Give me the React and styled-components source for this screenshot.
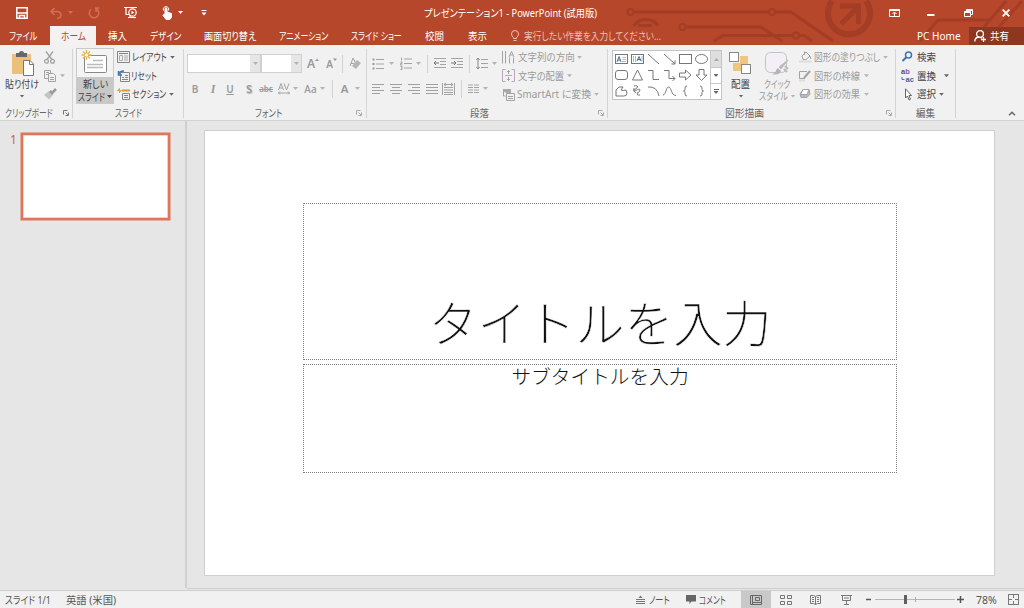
import React, { useLayoutEffect, useRef, useState } from "react";
import styled, { createGlobalStyle, css } from "styled-components";

const UI_FONT = '"Noto Sans", "Noto Sans CJK JP", sans-serif';

const GlobalStyle = createGlobalStyle`
  * { box-sizing: border-box; }
  html, body { margin: 0; padding: 0; }
  body { width: 1024px; height: 608px; overflow: hidden; font-family: ${UI_FONT}; background: #e6e6e6; }
  svg { display: block; flex: none; overflow: visible; }
`;

/* ---------- condensed UI label ---------- */
const gap = css`margin-left: ${(p) => p.$gap || 0}px;`;

const LabelBox = styled.span`
  display: block;
  flex: none;
  width: ${(p) => p.$w}px;
  height: 14px;
  line-height: 14px;
  font-size: ${(p) => p.$size || 10.5}px;
  font-weight: ${(p) => p.$weight || 400};
  color: ${(p) => p.$color || "#444"};
  white-space: nowrap;
  ${gap}
`;
const LabelInk = styled.span`
  display: inline-block;
  transform-origin: 0 50%;
  font-feature-settings: "palt";
`;

function Label({ children, w, size, color, gap: g, weight }) {
  const ref = useRef(null);
  const [scale, setScale] = useState(1);
  useLayoutEffect(() => {
    setScale(w / ref.current.offsetWidth);
  }, [w]);
  return (
    <LabelBox $w={w} $size={size} $color={color} $gap={g} $weight={weight}>
      <LabelInk ref={ref} style={{ transform: `scaleX(${scale})` }}>{children}</LabelInk>
    </LabelBox>
  );
}

const Arrow = styled.i`
  flex: none;
  width: 5px;
  height: 3px;
  background: ${(p) => p.$color || "#666"};
  clip-path: polygon(0 0, 100% 0, 50% 100%);
  ${gap}
`;

const IconSvg = styled.svg`
  fill: none;
  stroke: ${(p) => p.$c || "#a3a3a3"};
  stroke-width: ${(p) => p.$sw || 1};
  ${gap}
`;
const Icon = ({ w, h, gap: g, c, sw, children }) => (
  <IconSvg width={w} height={h} viewBox={`0 0 ${w} ${h}`} $gap={g} $c={c} $sw={sw}>{children}</IconSvg>
);

/* ---------- frame ---------- */
const Window = styled.div`
  width: 1024px;
  height: 608px;
  display: flex;
  flex-direction: column;
  background: #e6e6e6;
`;
const Header = styled.header`
  position: relative;
  height: 45px;
  flex: none;
  background: #b7472a;
  display: flex;
  flex-direction: column;
`;
const Circuit = styled.svg`
  position: absolute;
  left: 0;
  top: 0;
  fill: none;
  stroke: #a33d26;
  stroke-width: 3;
`;
const TitleBar = styled.div`
  position: relative;
  height: 26px;
  display: flex;
  align-items: center;
  padding-bottom: 1px;
`;
const TabBar = styled.nav`
  position: relative;
  height: 19px;
  display: flex;
  align-items: center;
`;
const ActiveTab = styled.div`
  width: 46px;
  height: 19px;
  margin-left: 13px;
  background: #f3f2f1;
  display: flex;
  align-items: center;
  justify-content: center;
`;
const ShareButton = styled.div`
  width: 55px;
  height: 18px;
  margin: 1px 0 0 8px;
  background: #8d3721;
  display: flex;
  align-items: center;
  padding-left: 5px;
`;

/* ---------- ribbon ---------- */
const Ribbon = styled.section`
  height: 76px;
  flex: none;
  display: flex;
  background: #f1f1f1;
  border-bottom: 1px solid #d2d2d2;
`;
const Group = styled.div`
  flex: none;
  width: ${(p) => p.$w}px;
  height: 75px;
  padding-top: 3px;
  display: flex;
  flex-direction: column;
  background: linear-gradient(#d4d4d4, #d4d4d4) right 4px / 1px 69px no-repeat;
`;
const GroupBody = styled.div`
  flex: none;
  height: 56px;
  display: flex;
`;
const GroupFooter = styled.div`
  flex: none;
  height: 16px;
  padding-top: 1px;
  display: flex;
  align-items: center;
`;
const Column = styled.div`
  display: flex;
  flex-direction: column;
  flex: none;
  ${gap}
`;
const CommandRow = styled.div`
  display: flex;
  align-items: center;
  height: 18.5px;
`;
const ToolRow = styled.div`
  display: flex;
  align-items: center;
  height: ${(p) => p.$h || 25}px;
  margin-top: ${(p) => p.$top || 0}px;
`;
const BigButton = styled.div`
  flex: none;
  width: ${(p) => p.$w}px;
  height: 56px;
  display: flex;
  flex-direction: column;
  align-items: center;
  padding-top: ${(p) => p.$top || 3}px;
  ${gap}
`;
const BigLine = styled.div`
  display: flex;
  align-items: center;
  justify-content: center;
  height: ${(p) => p.$h || 13}px;
  margin-top: ${(p) => p.$top || 0}px;
`;
const NewSlideButton = styled.div`
  flex: none;
  width: 38px;
  height: 56px;
  margin-left: 3px;
  border: 1px solid #c9c9c9;
  background: linear-gradient(#f4f4f4 28px, #c8c8c8 28px);
  display: flex;
  flex-direction: column;
  align-items: center;
`;
const Combo = styled.div`
  flex: none;
  width: ${(p) => p.$w}px;
  height: 19px;
  border: 1px solid #d0d0d0;
  background: linear-gradient(90deg, #fff calc(100% - 10px), #e6e6e6 calc(100% - 10px));
  display: flex;
  align-items: center;
  justify-content: flex-end;
  padding-right: 2px;
  ${gap}
`;
const Rule = styled.i`
  flex: none;
  width: 1px;
  height: 18px;
  background: #d2d2d2;
  ${gap}
`;
const Glyph = styled.span`
  flex: none;
  width: ${(p) => p.$w}px;
  text-align: center;
  font-size: ${(p) => p.$size || 11}px;
  line-height: 14px;
  font-weight: ${(p) => p.$weight || 600};
  font-style: ${(p) => (p.$italic ? "italic" : "normal")};
  font-family: ${(p) => (p.$serif ? '"Liberation Serif", serif' : UI_FONT)};
  text-decoration: ${(p) => p.$deco || "none"};
  text-shadow: ${(p) => (p.$shadow ? "1px 1px 1px #bbb" : "none")};
  color: #999;
  white-space: nowrap;
  ${gap}
`;
const Gallery = styled.div`
  flex: none;
  display: flex;
  width: 110px;
  height: 50px;
  margin: 2px 0 0 4px;
  border: 1px solid #c3c3c3;
  background: #fff;
`;
const ShapeGrid = styled.div`
  display: grid;
  grid-template-columns: repeat(6, 16px);
  grid-template-rows: repeat(3, 16px);
  width: 97px;
  place-items: center;
`;
const GalleryScroll = styled.div`
  flex: 1;
  display: grid;
  grid-template-rows: repeat(3, 1fr);
  border-left: 1px solid #c9c9c9;
`;
const ScrollCell = styled.div`
  display: flex;
  flex-direction: column;
  gap: 1px;
  align-items: center;
  justify-content: center;
  background: ${(p) => (p.$off ? "#dedede" : "#fff")};
  & + & { border-top: 1px solid #c9c9c9; }
`;
const Bar = styled.i`
  width: 5px;
  height: 1px;
  background: #666;
`;
const UpArrow = styled(Arrow)`
  transform: rotate(180deg);
`;
const RibbonEnd = styled.div`
  flex: 1;
  display: flex;
  align-items: flex-end;
  justify-content: flex-end;
  padding: 0 8px 4px 0;
`;

/* ---------- workspace ---------- */
const Workspace = styled.main`
  height: 467px;
  flex: none;
  display: flex;
`;
const ThumbPane = styled.aside`
  width: 187px;
  height: 467px;
  border-right: 2px solid #d0d0d0;
  display: flex;
  align-items: flex-start;
  padding: 12px 0 0 10px;
`;
const ThumbNumber = styled.span`
  width: 11px;
  margin-top: -1px;
  font-size: 12px;
  line-height: 15px;
  color: #cf5f43;
`;
const Thumb = styled.div`
  width: 149px;
  height: 87px;
  background: #fff;
  border: 2px solid #de765a;
  box-shadow: 0 0 0 0.5px #de765a, inset 0 0 0 0.5px #e9a390;
`;
const Canvas = styled.div`
  flex: 1;
  height: 468px;
  border-bottom: 1px solid #cdcdcd;
  padding: 9px 0 0 17px;
`;
const Slide = styled.div`
  width: 791px;
  height: 446px;
  background: #fff;
  border: 1px solid #cfcfcf;
  padding: 72px 0 0 98px;
  display: flex;
  flex-direction: column;
  gap: 4px;
`;
const Placeholder = styled.div`
  width: 594px;
  height: ${(p) => p.$h}px;
  border: 1px dotted #7a7a7a;
  display: flex;
  justify-content: center;
  align-items: ${(p) => (p.$bottom ? "flex-end" : "flex-start")};
  color: #111;
  font-family: "Noto Sans CJK JP", sans-serif;
  font-weight: 300;
  white-space: nowrap;
`;
const TitleText = styled.div`
  font-size: 49px;
  line-height: 72px;
  padding-bottom: 2px;
  -webkit-text-stroke: 0.5px #fff;
`;
const SubtitleText = styled.div`
  font-size: 19.7px;
  line-height: 21px;
`;

/* ---------- status bar ---------- */
const StatusBar = styled.footer`
  height: 18px;
  margin-top: 2px;
  border-top: 1px solid #cdcdcd;
  background: #f1f1f1;
  display: flex;
  align-items: center;
`;
const ActiveView = styled.div`
  width: 30px;
  height: 17px;
  margin-left: 15px;
  background: #c9c9c9;
  display: flex;
  align-items: center;
  justify-content: center;
`;
const ZoomTrack = styled.div`
  width: 80px;
  height: 10px;
  margin-left: 4px;
  display: flex;
  align-items: center;
  background: linear-gradient(#b5b5b5, #b5b5b5) 0 50% / 100% 1px no-repeat;
`;
const ZoomKnob = styled.i`
  width: 3px;
  height: 9px;
  margin-left: 29px;
  background: #606060;
`;
const ZoomTick = styled.i`
  width: 1px;
  height: 5px;
  margin-left: 8px;
  background: #aaa;
`;

const Launcher = ({ gap: g, c = "#aaa" }) => (
  <Icon w={6} h={6} gap={g} c={c}>
    <path d="M.5 4.5V.5H4.5M2.5 2.5L5 5M5.5 2.5V5.5H2.5" />
  </Icon>
);

const Lines = ({ rows, w, gap: g }) => (
  <Icon w={w} h={10} gap={g} c="#a0a0a0">
    {rows.map(([a, b], i) => <path key={i} d={`M${a} ${i * 3 + 0.5}H${b}`} />)}
  </Icon>
);

const Indent = ({ right, gap: g }) => (
  <Icon w={12} h={11} gap={g}>
    <path d="M0 .5H12M6 3.5H12M6 6.5H12M0 9.5H12" />
    <path d={right ? "M0 5H5M3 3L5 5L3 7" : "M0 5H5M2 3L0 5L2 7"} stroke="#777" />
  </Icon>
);

const SHAPES = [
  <><rect x=".5" y="1.5" width="12" height="9" /><path d="M2 9L4 3.5L6 9M3 7H5.5" stroke="#41719c" /><path d="M7.5 4.5H11M7.5 6.5H11M7 8.5H11" strokeWidth=".7" stroke="#999" /></>,
  <><rect x=".5" y="1.5" width="12" height="9" /><path d="M6 8L8 3.5L10 8M7 6.5H9.5" stroke="#41719c" /><path d="M2.5 3V9M4.5 3V9M11 3V9" strokeWidth=".7" stroke="#999" /></>,
  <path d="M1 1L12 11" />,
  <path d="M1 1L12 11M12 7.5V11H8.5" />,
  <rect x=".5" y="1.5" width="12" height="9" />,
  <ellipse cx="6.5" cy="6" rx="6" ry="4.5" />,
  <rect x=".5" y="1.5" width="12" height="9" rx="2.5" />,
  <path d="M6.5 1L11.5 11H1.5Z" />,
  <path d="M1 1.5H6V10.5H12" />,
  <path d="M1 1.5H6V9.5H12M9.5 7L12 9.5L9.5 12" />,
  <path d="M.5 4H6.5V1L12 6L6.5 11V8H.5Z" />,
  <path d="M4 .5H9V6H12L6.5 11.5L1 6H4Z" />,
  <path d="M1 11V5L4 2H8L6 5Q8 6 11 5L12 8Q12 11 9 11Z" />,
  <path d="M3 1Q8 0 6 3Q1 6 4 6Q9 3 9 5Q9 7 6 8Q6 11 9 10M3 3Q1 6 5 8" />,
  <path d="M1 2Q10 1 12 11" />,
  <path d="M0 10C3 10 3 2 5.500 2C8.500 2 8 10.500 13 10.500" />,
  <path d="M8 1Q6 1 6 3V4.500Q6 6 4.500 6Q6 6 6 7.500V9Q6 11 8 11" />,
  <path d="M5 1Q7 1 7 3V4.500Q7 6 8.500 6Q7 6 7 7.500V9Q7 11 5 11" />,
];

const GREY = "#9b9b9b";
const OFF = "#b3b3b3";

function Decoration() {
  return (
    <Circuit width="1024" height="45" viewBox="0 0 1024 45">
      <circle cx="630.5" cy="12" r="3" strokeWidth="2" />
      <path d="M634 12H769M775.500 12H791L833 41M686 27H761L782 41M714 41L723 35.500H792M799.500 35.500H804L812 41" />
      <circle cx="772" cy="12" r="3" strokeWidth="2" />
      <circle cx="682.500" cy="27" r="3" strokeWidth="2" />
      <circle cx="796" cy="35.500" r="3" strokeWidth="2" />
      <path d="M634 26Q637 19.500 645.500 19.500Q655 19.500 658 26M638 25.500H652" />
      <path d="M832 1A21 21 0 1 0 866 1" strokeWidth="6" />
      <path d="M841 24L857 8M840 6H858.500V24" strokeWidth="5" />
      <path d="M920 41L938 20H990M984 27L1006 1M999 27L1022 1" />
    </Circuit>
  );
}

function AppHeader() {
  const W = "#fff";
  const dim = "#d06f57";
  return (
    <Header>
      <Decoration />
      <TitleBar>
        <Icon w={12} h={12} gap={16} c={W} sw={1.5}>
          <path d="M.8 .8H11.200V11.200H.8ZM1 6H11M3.500 11V8.500H8.500V11" />
        </Icon>
        <Icon w={12} h={12} gap={22} c={dim} sw={1.6}>
          <path d="M4.500 1L1 4.500L4.500 8M1 4.500H7Q11 5 11 8Q11 11 7 11.500" />
        </Icon>
        <Arrow $gap={6} $color={dim} />
        <Icon w={12} h={12} gap={15} c={dim} sw={1.6}>
          <path d="M3 2.500A4.700 4.700 0 1 0 8 1.800M7 1H11.500M8 1V5" />
        </Icon>
        <Icon w={14} h={13} gap={24} c={W} sw={1.2}>
          <path d="M0 1.500H13M2 1.500V8.500H5M4 11.500H8M6 9V11" />
          <circle cx="8.500" cy="6.500" r="3.700" /><path d="M7.500 4.800L10.300 6.500L7.500 8.200Z" fill={W} stroke="none" /><path d="M8 11.500H12" />
        </Icon>
        <Icon w={11} h={14} gap={24} c={W} sw={1}>
          <path d="M3 8V2.500Q4 1 5 2.500V6L9.500 7.500V11L8 13.500H4L1 9.500L1.500 8.500Z" fill={W} />
          <path d="M1.500 4.500Q.5 1 4 .7Q7.500 1 6.500 4.500" />
        </Icon>
        <Arrow $gap={5} $color={W} />
        <Icon w={6} h={6} gap={18} c={W}><path d="M.5 .5H5.500" /><path d="M.5 2.500H5.500L3 5.500Z" fill={W} stroke="none" /></Icon>
        <Label w={173} gap={217} color="#fff" size={10.5}>プレゼンテーション1 - PowerPoint (試用版)</Label>
        <Icon w={11} h={8} gap={292} c={W}>
          <path d="M.5 .5H10.500V7.500H.5ZM1 1.500H10M5.500 7V3.500M3.500 5L5.500 3L7.500 5" />
        </Icon>
        <Icon w={8} h={8} gap={27} c={W} sw={2}><path d="M0 6H7.500" /></Icon>
        <Icon w={9} h={8} gap={29} c={W}><path d="M2.500 2V.5H8.500V5.500H7M2.500 1.500H8.500" /><path d="M.5 2.500H6.500V7.500H.5ZM.5 3.500H6.500" /></Icon>
        <Icon w={8} h={8} gap={29} c={W} sw={1.8}><path d="M.7 .7L7.300 7.300M7.300 .7L.7 7.300" /></Icon>
      </TitleBar>
      <TabBar>
        <Label w={28} gap={9} color="#fff">ファイル</Label>
        <ActiveTab><Label w={25} color="#b7472a">ホーム</Label></ActiveTab>
        <Label w={19} gap={12} color="#fff">挿入</Label>
        <Label w={31} gap={23} color="#fff">デザイン</Label>
        <Label w={52} gap={23} color="#fff">画面切り替え</Label>
        <Label w={49} gap={23} color="#fff">アニメーション</Label>
        <Label w={51} gap={23} color="#fff">スライド ショー</Label>
        <Label w={19} gap={23} color="#fff">校閲</Label>
        <Label w={19} gap={24} color="#fff">表示</Label>
        <Icon w={8} h={12} gap={24} c="#f0c5b8">
          <path d="M2.500 8.500V7.500Q.5 6 .5 4Q.5 .5 4 .5Q7.500 .5 7.500 4Q7.500 6 5.500 7.500V8.500ZM2.500 10.500H5.500" />
        </Icon>
        <Label w={137} gap={5} color="#eebfb0">実行したい作業を入力してください...</Label>
        <Label w={44} gap={256} color="#fff">PC Home</Label>
        <ShareButton>
          <Icon w={13} h={12} c={W} sw={1.3}>
            <circle cx="6" cy="4" r="3.400" /><path d="M.8 11.500Q1 7.500 4.500 7L8 8M9.500 7V12M7 9.500H12" />
          </Icon>
          <Label w={19} gap={3} color="#fff">共有</Label>
        </ShareButton>
      </TabBar>
    </Header>
  );
}

function ClipboardGroup() {
  return (
    <Group $w={73}>
      <GroupBody>
        <BigButton $w={34} $gap={5}>
          <Icon w={24} h={25} gap={2}>
            <path d="M1 3H20V23H1Z" fill="#ecc078" stroke="none" />
            <path d="M5 2H8Q8 0 10.500 0Q13 0 13 2H16V6H5Z" fill="#666" stroke="none" />
            <path d="M12.500 9.500H19L22.500 13V24.500H12.500Z" fill="#fff" stroke="#777" /><path d="M18.500 9.500V13.500H22.500" stroke="#777" />
          </Icon>
          <BigLine $h={15}><Label w={34}>貼り付け</Label></BigLine>
          <BigLine $h={6} $top={2}><Arrow /></BigLine>
        </BigButton>
        <Column $gap={5}>
          <CommandRow>
            <Icon w={11} h={13} sw={1.3}>
              <path d="M2 .5L8 8.500M9 .5L3 8.500" /><circle cx="2.500" cy="10.300" r="1.900" /><circle cx="8.500" cy="10.300" r="1.900" />
            </Icon>
          </CommandRow>
          <CommandRow>
            <Icon w={12} h={12}>
              <path d="M.5 .5H6.500V8.500H.5ZM2 2.500H5M2 4.500H5" /><path d="M4.500 3.500H9.500L11.500 5.500V11.500H4.500Z" fill="#f1f1f1" /><path d="M6 7.500H10M6 9.500H10" />
            </Icon>
            <Arrow $gap={4} $color={OFF} />
          </CommandRow>
          <CommandRow>
            <Icon w={13} h={12}>
              <path d="M0 7L5 3L9 7L5 11.500Z" fill="#c4c4c4" stroke="none" /><path d="M6 3L9 6M9 4L12 1" strokeWidth="2.500" stroke="#999" />
            </Icon>
          </CommandRow>
        </Column>
      </GroupBody>
      <GroupFooter><Label w={48} gap={5} color="#666">クリップボード</Label><Launcher gap={10} c="#777" /></GroupFooter>
    </Group>
  );
}

function SlidesGroup() {
  return (
    <Group $w={111}>
      <GroupBody>
        <NewSlideButton>
          <Icon w={26} h={24} gap={-2} c="#888">
            <rect x="3.500" y="6.500" width="22" height="17" rx="1" fill="#fff" />
            <path d="M12 11.500H22M6 15.500H22M6 18.500H22" stroke="#bbb" strokeWidth="1.600" />
            <path d="M5.500 1V11M.5 6H10.500M2 2.500L9 9.500M9 2.500L2 9.500" stroke="#e8b458" strokeWidth="1.400" /><circle cx="5.500" cy="6" r="1.500" fill="#fff" stroke="none" />
          </Icon>
          <BigLine $h={14} $top={4}><Label w={25}>新しい</Label></BigLine>
          <BigLine $h={11}><Label w={27}>スライド</Label><Arrow $gap={2} $color="#444" /></BigLine>
        </NewSlideButton>
        <Column $gap={3}>
          <CommandRow>
            <Icon w={13} h={12} c="#858585"><path d="M.5 .5H12.500V11.500H.5ZM2 2.500H11" /><path d="M2.500 4.500H5.500V9.500H2.500ZM7 5H11M7 7H11M7 9H11" stroke="#aaa" /></Icon>
            <Label w={35} gap={2}>レイアウト</Label><Arrow $gap={3} />
          </CommandRow>
          <CommandRow>
            <Icon w={13} h={12} c="#858585"><path d="M3.500 2.500H12.500V11.500H3.500ZM8 5.500H11M5 7.500H7M8 7.500H11M5 9.500H11" /><path d="M1.500 1V5H5M1.500 5Q2 1 7 1" stroke="#3b78b5" strokeWidth="1.500" /></Icon>
            <Label w={26} gap={1}>リセット</Label>
          </CommandRow>
          <CommandRow>
            <Icon w={13} h={12} c="#858585"><path d="M5.500 5.500H12.500V11.500H5.500ZM7 7.500H11M7 9.500H11" /><path d="M5 2.500H13" stroke="#d89b3c" strokeWidth="2" /><path d="M2.500 0V5M0 2.500H5M1 1L4 4" stroke="#e3a94b" /></Icon>
            <Label w={34} gap={2}>セクション</Label><Arrow $gap={3} />
          </CommandRow>
        </Column>
      </GroupBody>
      <GroupFooter><Label w={27} gap={42} color="#666">スライド</Label></GroupFooter>
    </Group>
  );
}

function FontGroup() {
  return (
    <Group $w={183}>
      <GroupBody>
        <Column>
          <ToolRow $top={3}>
            <Combo $w={74} $gap={3}><Arrow $color={OFF} /></Combo>
            <Combo $w={41}><Arrow $color={OFF} /></Combo>
            <Glyph $w={8} $size={12} $gap={5}>A</Glyph>
            <Icon w={4} h={14}><path d="M0 4L2 1.500L4 4Z" fill="#999" stroke="none" /></Icon>
            <Glyph $w={7} $size={10} $gap={7}>A</Glyph>
            <Icon w={4} h={14}><path d="M0 1.500L2 4L4 1.500Z" fill="#999" stroke="none" /></Icon>
            <Rule $gap={5} />
            <Icon w={12} h={13} gap={6}>
              <path d="M1 9L4 1L6.500 6M2 6.500H5" /><path d="M3 9L8 3L12 6L7 12Z" fill="#b5b5b5" stroke="none" />
            </Icon>
          </ToolRow>
          <ToolRow>
            <Glyph $w={8} $gap={7} $size={10}>B</Glyph>
            <Glyph $w={8} $gap={10} $italic $serif $size={12}>I</Glyph>
            <Glyph $w={8} $gap={9} $deco="underline" $size={10}>U</Glyph>
            <Glyph $w={8} $gap={11} $shadow $size={11}>S</Glyph>
            <Glyph $w={14} $gap={6} $deco="line-through" $size={8}>abc</Glyph>
            <Icon w={12} h={12} gap={5}>
              <path d="M.5 .5L3 7L5.500 .5M1 -0" stroke="none" />
              <path d="M.5 7L3 .5L5.500 7M1.500 5H4.500M6 .5L8.500 7L11 .5M0 10H12M2 8.500L.5 10L2 11.500M10 8.500L11.500 10L10 11.500" />
            </Icon>
            <Arrow $gap={3} $color={OFF} />
            <Glyph $w={13} $gap={6} $size={10} $weight={500}>Aa</Glyph>
            <Arrow $gap={3} $color={OFF} />
            <Rule $gap={7} />
            <Glyph $w={9} $gap={7} $size={11.5}>A</Glyph>
            <Arrow $gap={6} $color={OFF} />
          </ToolRow>
        </Column>
      </GroupBody>
      <GroupFooter><Label w={27} gap={71} color="#666">フォント</Label><Launcher gap={74} /></GroupFooter>
    </Group>
  );
}

function ParagraphGroup() {
  return (
    <Group $w={241}>
      <GroupBody>
        <Column $gap={5}>
          <ToolRow $top={3}>
            <Icon w={12} h={12}><path d="M4 1.500H12M4 6H12M4 10.500H12" /><path d="M.5 1.500H2.500M.5 6H2.500M.5 10.500H2.500" strokeWidth="2" stroke="#999" /></Icon>
            <Arrow $gap={5} $color={OFF} />
            <Icon w={12} h={13} gap={6}><path d="M4 2H12M4 6.500H12M4 11H12M1.500 .5V3.500M.5 5H2V6.500H.5V8H2.500M.5 9.500H2V12.500H.5M1 11H2" /></Icon>
            <Arrow $gap={4} $color={OFF} />
            <Rule $gap={6} />
            <Indent gap={6} /><Indent right gap={5} />
            <Rule $gap={6} />
            <Icon w={12} h={13} gap={6}><path d="M5 2.500H12M5 6.500H12M5 10.500H12" /><path d="M2 1V12M.3 3L2 1L3.700 3M.3 10L2 12L3.700 10" stroke="#888" /></Icon>
            <Arrow $gap={4} $color={OFF} />
          </ToolRow>
          <ToolRow>
            <Lines w={12} gap={0} rows={[[0, 12], [0, 8], [0, 12], [0, 8]]} />
            <Lines w={12} gap={6} rows={[[0, 12], [2, 10], [0, 12], [2, 10]]} />
            <Lines w={12} gap={6} rows={[[0, 12], [4, 12], [0, 12], [4, 12]]} />
            <Lines w={12} gap={6} rows={[[0, 12], [0, 12], [0, 12], [0, 12]]} />
            <Icon w={13} h={14} gap={4}>
              <path d="M.5 1V13M12.500 1V13M2 2.500H11M2 5.500H11M2 8H11M2 10.500H11M2 12.500H11M4 1L2 2.500L4 4M9 1L11 2.500L9 4" />
            </Icon>
            <Rule $gap={6} />
            <Icon w={11} h={9} gap={6}><path d="M0 1H5M6 1H11M0 3.500H5M6 3.500H11M0 6H5M6 6H11M0 8.500H5M6 8.500H11" /></Icon>
            <Arrow $gap={4} $color={OFF} />
          </ToolRow>
        </Column>
        <Column $gap={5}>
          <CommandRow>
            <Icon w={13} h={13}><path d="M.5 0V12.500M3.500 0V12.500M7.500 6.500V12.500M11.500 6.500V12.500M7 6L9.500 .5L12 6M8 4H11" /></Icon>
            <Label w={57} gap={3} color={GREY}>文字列の方向</Label><Arrow $gap={2} $color={OFF} />
          </CommandRow>
          <CommandRow>
            <Icon w={13} h={13}><path d="M3.500 .5H.5V12.500H3.500M9.500 .5H12.500V12.500H9.500M3 6.500H10" stroke="#bda6c2" /><path d="M6.500 1.500V5M5 3L6.500 1.500L8 3M6.500 8V11.500M5 10L6.500 11.500L8 10" /></Icon>
            <Label w={46} gap={3} color={GREY}>文字の配置</Label><Arrow $gap={3} $color={OFF} />
          </CommandRow>
          <CommandRow>
            <Icon w={13} h={13}><path d="M1 1H9V5H4L1 3Z" fill="#aaa" stroke="none" /><path d="M1.500 3V8H3.500M4.500 5.500H12.500V12.500H4.500ZM6 8.500H11M6 10.500H11" /></Icon>
            <Label w={74} gap={2} color={GREY}>SmartArt に変換</Label><Arrow $gap={3} $color={OFF} />
          </CommandRow>
        </Column>
      </GroupBody>
      <GroupFooter><Label w={19} gap={103} color="#666">段落</Label><Launcher gap={109} /></GroupFooter>
    </Group>
  );
}

function DrawingGroup() {
  return (
    <Group $w={288}>
      <GroupBody>
        <Gallery>
          <ShapeGrid>{SHAPES.map((s, i) => <Icon key={i} w={13} h={12} c="#777">{s}</Icon>)}</ShapeGrid>
          <GalleryScroll>
            <ScrollCell $off><UpArrow $color="#aaa" /></ScrollCell>
            <ScrollCell><Arrow /></ScrollCell>
            <ScrollCell><Bar /><Arrow /></ScrollCell>
          </GalleryScroll>
        </Gallery>
        <BigButton $w={24} $gap={6} $top={4}>
          <Icon w={22} h={23} c="#888">
            <path d="M11 4H19V12H11ZM4 11H12V19H4Z" fill="#efc57f" stroke="none" />
            <rect x=".5" y=".5" width="9" height="9" fill="#fff" /><rect x="12.500" y="12.500" width="9" height="9" fill="#fff" />
          </Icon>
          <BigLine $h={14} $top={2}><Label w={19}>配置</Label></BigLine>
          <BigLine $h={6} $top={2}><Arrow $gap={2} /></BigLine>
        </BigButton>
        <BigButton $w={38} $gap={6} $top={4}>
          <Icon w={24} h={25} c="#c6bfc9">
            <rect x=".5" y=".5" width="21" height="20" rx="5" fill="#f4eef6" />
            <path d="M23 8L16 17L14 15Z" fill="#bbb" stroke="#bbb" /><path d="M13 16L16 19Q14 24 7 22Q11 21 11 18Z" fill="#b5b5b5" stroke="none" /><path d="M20 14L23 17M19 17L22 20" stroke="#bbb" strokeWidth="2" />
          </Icon>
          <BigLine $h={13}><Label w={26} color={GREY}>クイック</Label></BigLine>
          <BigLine $h={12}><Label w={29} color={GREY}>スタイル</Label><Arrow $gap={3} $color={OFF} /></BigLine>
        </BigButton>
        <Column $gap={3}>
          <CommandRow>
            <Icon w={13} h={12}><path d="M3 5L7 1L11 5L7 8.500H4ZM5.500 4V.5M11 5L12 8" /><path d="M0 10.500H12.500" strokeWidth="2" stroke="#ddd" /></Icon>
            <Label w={66} gap={2} color={GREY}>図形の塗りつぶし</Label><Arrow $gap={3} $color={OFF} />
          </CommandRow>
          <CommandRow>
            <Icon w={13} h={12}><path d="M8 1.500H.5V8.500H6" /><path d="M5 8L11 1" strokeWidth="2" /><path d="M0 10.500H6" stroke="#ddd" strokeWidth="2" /></Icon>
            <Label w={46} gap={2} color={GREY}>図形の枠線</Label><Arrow $gap={4} $color={OFF} />
          </CommandRow>
          <CommandRow>
            <Icon w={13} h={12}><path d="M1 6L4 1.500H10L11 6L8 9.500H2Z" fill="#bbb" /><path d="M4 1.500H10L8 6.500H1.500Z" fill="#fff" /></Icon>
            <Label w={46} gap={2} color={GREY}>図形の効果</Label><Arrow $gap={4} $color={OFF} />
          </CommandRow>
        </Column>
      </GroupBody>
      <GroupFooter><Label w={39} gap={117} color="#666">図形描画</Label><Launcher gap={122} /></GroupFooter>
    </Group>
  );
}

function EditGroup() {
  return (
    <Group $w={60}>
      <GroupBody>
        <Column $gap={5}>
          <CommandRow>
            <Icon w={14} h={12} c="#3f74ad" sw={1.5}><circle cx="7.500" cy="4" r="3" /><path d="M5.300 6.300L1.500 10" strokeWidth="2" /></Icon>
            <Label w={19} gap={2}>検索</Label>
          </CommandRow>
          <CommandRow>
            <Icon w={14} h={13}>
              <g fontFamily="Liberation Sans, sans-serif" fontSize="7.5" fontWeight="700" stroke="none">
                <text x="0" y="5" fill="#555">a<tspan fill="#8c56a5">b</tspan></text>
                <text x="4.500" y="12.800" fill="#3f6398">ac</text>
              </g>
              <path d="M1 8V10.500H3.500" stroke="#4877b5" />
            </Icon>
            <Label w={19} gap={2}>置換</Label><Arrow $gap={8} />
          </CommandRow>
          <CommandRow>
            <Icon w={14} h={13} c="#666"><path d="M4.500 .8V10L6.500 8L8 12L9.500 11.300L8 7.500H10.500Z" fill="#fff" /></Icon>
            <Label w={19} gap={2}>選択</Label><Arrow $gap={3} />
          </CommandRow>
        </Column>
      </GroupBody>
      <GroupFooter><Label w={19} gap={20} color="#666">編集</Label></GroupFooter>
    </Group>
  );
}

function Status() {
  const c = "#777";
  return (
    <StatusBar>
      <Label w={46} gap={5} color="#555">スライド 1/1</Label>
      <Label w={50} gap={15} color="#555">英語 (米国)</Label>
      <Icon w={9} h={10} gap={520} c={c}><path d="M0 4.500H9M0 6.500H9M0 8.500H9" /><path d="M2.500 3L4.500 .5L6.500 3Z" fill={c} stroke="none" /></Icon>
      <Label w={21} gap={4} color="#555">ノート</Label>
      <Icon w={10} h={9} gap={16} c={c}><path d="M0 0H10V6.500H5.500L3.500 9V6.500H0Z" fill="#666" stroke="none" /></Icon>
      <Label w={27} gap={3} color="#555">コメント</Label>
      <ActiveView>
        <Icon w={12} h={10} c="#666"><path d="M.5 .5H11.500V9.500H.5ZM2.500 .5V9.500M2.500 7.500H11.500M5.500 2.500H9.500V5.500H5.500Z" /></Icon>
      </ActiveView>
      <Icon w={12} h={10} gap={9} c={c}><path d="M.5 .5H4.500V3.500H.5ZM7.500 .5H11.500V3.500H7.500ZM.5 6.500H4.500V9.500H.5ZM7.500 6.500H11.500V9.500H7.500Z" /></Icon>
      <Icon w={11} h={10} gap={18} c={c}><path d="M.5 .5H3.500L5.500 1.500L7.500 .5H10.500V8.500H7.500L5.500 9.500L3.500 8.500H.5ZM5.500 1.500V9.500M2 2.500H4M2 4.500H4M2 6.500H4M7 2.500H9M7 4.500H9M7 6.500H9" /></Icon>
      <Icon w={11} h={10} gap={20} c={c}><path d="M0 .5H11M1.500 .5V5.500H9.500V.5M3 3H8M5.500 5.500V9.500M3 9.500H8" /></Icon>
      <Icon w={5} h={3} gap={14} c="#555" sw={1.5}><path d="M0 1.500H5" /></Icon>
      <ZoomTrack><ZoomKnob /><ZoomTick /></ZoomTrack>
      <Icon w={7} h={7} gap={2} c="#555" sw={1.5}><path d="M0 3.500H7M3.500 0V7" /></Icon>
      <Label w={21} gap={12} color="#555">78%</Label>
      <Icon w={11} h={11} gap={11} c={c}><path d="M.5 3.500V.5H3.500M7.500 .5H10.500V3.500M10.500 7.500V10.500H7.500M3.500 10.500H.5V7.500M5.500 1V4M5.500 7V10M1 5.500H4M7 5.500H10M.5 .5H10.500V10.500H.5Z" /></Icon>
    </StatusBar>
  );
}

export default function App() {
  return (
    <Window>
      <GlobalStyle />
      <AppHeader />
      <Ribbon>
        <ClipboardGroup />
        <SlidesGroup />
        <FontGroup />
        <ParagraphGroup />
        <DrawingGroup />
        <EditGroup />
        <RibbonEnd><Icon w={8} h={5} c="#666" sw={1.5}><path d="M1 4.200L4 1.200L7 4.200" /></Icon></RibbonEnd>
      </Ribbon>
      <Workspace>
        <ThumbPane>
          <ThumbNumber>1</ThumbNumber>
          <Thumb />
        </ThumbPane>
        <Canvas>
          <Slide>
            <Placeholder $h={157} $bottom><TitleText>タイトルを入力</TitleText></Placeholder>
            <Placeholder $h={109}><SubtitleText>サブタイトルを入力</SubtitleText></Placeholder>
          </Slide>
        </Canvas>
      </Workspace>
      <Status />
    </Window>
  );
}
